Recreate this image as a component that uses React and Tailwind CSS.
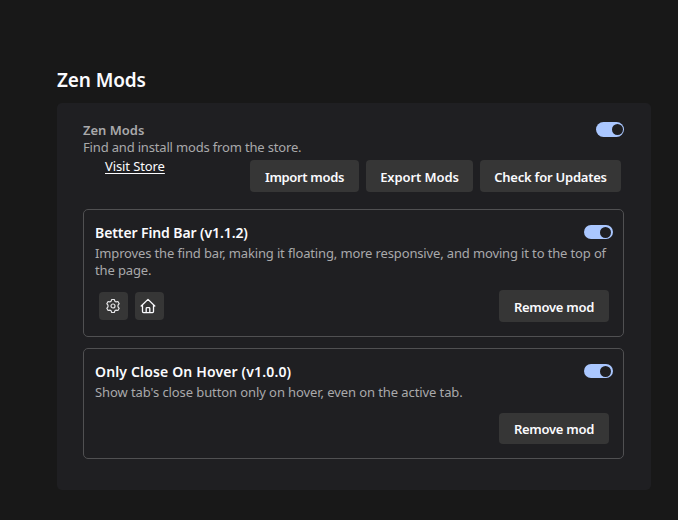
import React from "react";

function Toggle({ className = "h-[14px] w-[29px] pr-[2px]" }) {
  return (
    <div role="switch" aria-checked="true" className={`flex shrink-0 items-center justify-end rounded-full bg-[#aac7ff] ${className}`}>
      <div className="h-[11px] w-[11px] rounded-full bg-[#1f1f22]" />
    </div>
  );
}

function Button({ className, textClass = "", children }) {
  return (
    <button className={`flex shrink-0 items-center justify-center rounded-[4px] bg-[#363636] pt-[2px] text-[13px] leading-[17px] font-semibold whitespace-nowrap text-[#fbfbfe] ${className}`}>
      <span className={textClass}>{children}</span>
    </button>
  );
}

function GearIcon() {
  return (
    <svg width="16" height="16" viewBox="0 0 16 16" fill="none" stroke="#e4e4e6" strokeWidth="1.2" strokeLinejoin="round">
      <path d="M6.1 3.2 6.7 1.5h2.6l.6 1.7 1.2.7 1.8-.4 1.3 2.2L13 7.2v1.6l1.2 1.5-1.3 2.2-1.8-.4-1.2.7-.6 1.7H6.7l-.6-1.7-1.2-.7-1.8.4-1.3-2.2L3 8.800V7.200L1.800 5.700l1.300-2.200 1.800.400z" />
      <circle cx="8" cy="8" r="2" />
    </svg>
  );
}

function HomeIcon() {
  return (
    <svg width="16" height="16" viewBox="0 0 16 16" fill="none" stroke="#fbfbfe" strokeWidth="1.3" strokeLinecap="round" strokeLinejoin="round">
      <path d="M1.2 8 8 1.4 14.800 8M2.500 7v6.600q0 1 1 1h9q1 0 1-1V7" />
      <path d="M6.200 14.400v-4q0-.800.800-.800h2q.800 0 .800.800v4" />
    </svg>
  );
}

export default function App() {
  return (
    <div className="h-[520px] w-[678px] overflow-hidden bg-[#181818] pt-[68px] pl-[57px] font-['Noto_Sans','Open_Sans',sans-serif] text-[13px] leading-[17px] text-[#fbfbfe]">
      <h1 className="h-[35px] text-[19px] leading-[25px] font-semibold tracking-[-0.12px] whitespace-nowrap"><span>Zen Mods</span></h1>
      <section className="h-[387px] w-[594px] rounded-[5px] bg-[#1f1f22] pt-[19px] pr-[27px] pl-[26px]">
        <div className="flex h-[38px] justify-between">
          <div className="whitespace-nowrap text-[#a9a9ab]">
            <h2 className="font-semibold"><span>Zen Mods</span></h2>
            <p className="tracking-[-0.17px]"><span>Find and install mods from the store.</span></p>
          </div>
          <Toggle className="h-[15px] w-[28px] pr-[1px]" />
        </div>
        <div className="flex h-[49px] pr-[3px]">
          <a className="mt-[-2px] ml-[22px] tracking-[-0.1px] whitespace-nowrap"><span className="underline underline-offset-2">Visit Store</span></a>
          <div className="ml-auto flex gap-[7px]">
            <Button className="h-8 w-[109px]" textClass="tracking-[-0.33px]">Import mods</Button>
            <Button className="h-8 w-[107px]" textClass="tracking-[-0.1px]">Export Mods</Button>
            <Button className="h-8 w-[141px]" textClass="tracking-[-0.23px]">Check for Updates</Button>
          </div>
        </div>
        <article className="h-[128px] rounded-[5px] border border-[#505052] pt-[14px] pr-[10px] pl-[11px]">
          <div className="flex h-[21px] justify-between">
            <h3 className="text-[14px] font-semibold tracking-[-0.1px] whitespace-nowrap"><span>Better Find Bar (v1.1.2)</span></h3>
            <Toggle className="mt-[1px] h-[14px] w-[29px] pr-[2px]" />
          </div>
          <p className="tracking-[-0.14px] whitespace-nowrap text-[#a9a9ab]">
            <span>Improves the find bar, making it floating, more responsive, and moving it to the top of</span><br />
            <span>the page.</span>
          </p>
          <div className="mt-[11px] flex items-center pr-[4px] pl-[4px]">
            <button className="flex h-7 w-[29px] items-center justify-center rounded-[4px] bg-[#363636] pr-[2px]"><GearIcon /></button>
            <button className="ml-[7px] flex h-7 w-[29px] items-center justify-center rounded-[4px] bg-[#363636] pr-[3px]"><HomeIcon /></button>
            <Button className="ml-auto h-8 w-[110px]" textClass="tracking-[-0.27px]">Remove mod</Button>
          </div>
        </article>
        <article className="mt-[11px] h-[111px] rounded-[5px] border border-[#505052] pt-[14px] pr-[10px] pl-[11px]">
          <div className="flex h-[21px] justify-between">
            <h3 className="text-[14px] font-semibold tracking-[0.15px] whitespace-nowrap"><span>Only Close On Hover (v1.0.0)</span></h3>
            <Toggle className="mt-[1px] h-[14px] w-[29px] pr-[2px]" />
          </div>
          <p className="tracking-[-0.09px] whitespace-nowrap text-[#a9a9ab]"><span>Show tab's close button only on hover, even on the active tab.</span></p>
          <div className="mt-[12px] flex justify-end pr-[4px]">
            <Button className="h-[31px] w-[110px]" textClass="tracking-[-0.27px]">Remove mod</Button>
          </div>
        </article>
      </section>
    </div>
  );
}
